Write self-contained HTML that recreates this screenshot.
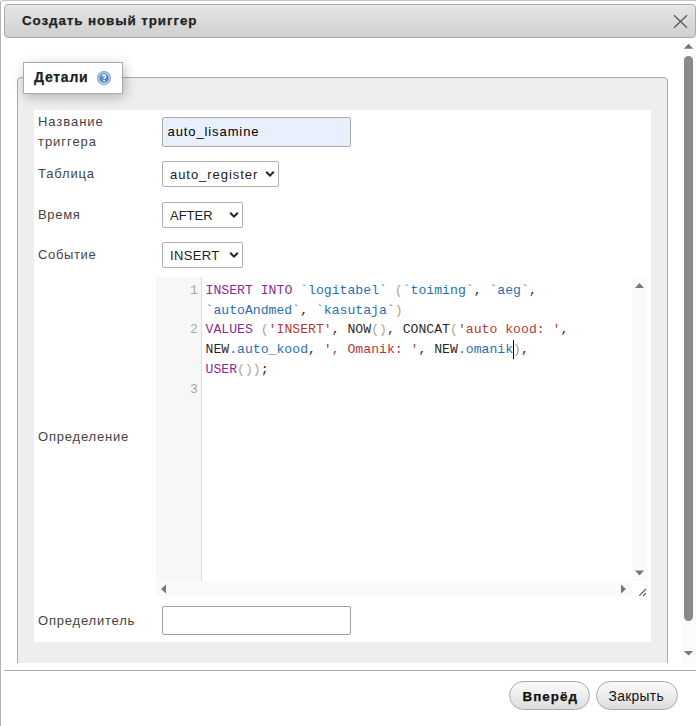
<!DOCTYPE html>
<html><head><meta charset="utf-8">
<style>
html,body{margin:0;padding:0;}
body{width:696px;height:726px;overflow:hidden;background:#fff;position:relative;font-family:"Liberation Sans",sans-serif;font-size:13px;color:#444;}
.a{position:absolute;}
.t{position:absolute;white-space:nowrap;line-height:13px;}
#dlg{left:0;top:0;width:720px;height:740px;border-left:1px solid #b4b4b4;border-top:1px solid #c4c4c4;border-top-left-radius:3px;box-sizing:border-box;}
#title{left:4px;top:4px;width:692px;height:34px;box-sizing:border-box;border:1px solid #aaa;border-radius:4px;background:linear-gradient(#e6e6e6,#cfcfcf);}
#fs{left:17px;top:77px;width:651px;height:600px;box-sizing:border-box;border:1px solid #aaa;border-radius:4px 4px 0 0;background:#eee;}
#clip{left:0;top:40px;width:696px;height:623px;overflow:hidden;}
#legend{left:23px;top:62px;width:100px;height:32px;box-sizing:border-box;border:1px solid #aaa;background:#fff;box-shadow:2px 3px 12px rgba(0,0,0,.25);}
#tbl{left:34px;top:110px;width:617px;height:532px;background:#fff;}
.inp{position:absolute;box-sizing:border-box;border:1px solid #aaa;border-radius:2px;background:#fff;}
.sel{position:absolute;box-sizing:border-box;border:1px solid #b0b0b0;border-radius:2px;background:#fff;}
.chev{position:absolute;}
.code{position:absolute;opacity:0.85;font-family:"Liberation Mono",monospace;font-size:13.15px;line-height:19.7px;white-space:pre;color:#000;}
.kw{color:#770088}.id{color:#0055aa}.st{color:#aa1111}.br{color:#999977}
.btn{position:absolute;box-sizing:border-box;border:1px solid #aaa;border-radius:14.5px;background:linear-gradient(#fafafa,#f0f0f0 40%,#dcdcdc);}
</style></head><body>
<div id="dlg" class="a"></div>
<div id="title" class="a"></div>
<div class="t" style="left:22px;top:14px;font-weight:bold;color:#222;font-size:13.4px;letter-spacing:0.9px;-webkit-text-stroke:0.25px #222;">Создать новый триггер</div>
<svg class="a" style="left:670px;top:11px" width="22" height="22" viewBox="0 0 22 22"><path d="M4 4.3 L17 16.7 M17 4.3 L4 16.7" stroke="#5c5c5c" stroke-width="1.4" fill="none"/></svg>

<div id="clip" class="a">
  <div style="position:absolute;left:0;top:-40px;width:696px;height:726px;">
  <div id="fs" class="a"></div>
  <div id="tbl" class="a"></div>
  <div id="legend" class="a"></div>
  <div class="t" style="left:34px;top:70px;font-weight:bold;color:#222;font-size:14px;line-height:14px;letter-spacing:0.75px;-webkit-text-stroke:0.25px #222;">Детали</div>
  <svg class="a" style="left:96px;top:70px" width="16" height="16" viewBox="0 0 16 16">
    <circle cx="8" cy="8.1" r="7" fill="#7ea4d8"/>
    <circle cx="8" cy="8.1" r="5.9" fill="#d2e2f4"/>
    <circle cx="8" cy="8.1" r="4.9" fill="#5b89c9"/>
    <path d="M6.6 6.5 Q6.6 5 8.1 5 Q9.6 5 9.6 6.4 Q9.6 7.3 8.6 7.8 Q8.1 8.1 8.1 9" stroke="#fff" stroke-width="1.4" fill="none"/>
    <rect x="7.3" y="10" width="1.6" height="1.5" fill="#fff"/>
  </svg>

  <div class="t" style="left:38px;top:115px;letter-spacing:0.95px;">Название</div>
  <div class="t" style="left:38px;top:135px;letter-spacing:0.95px;">триггера</div>
  <div class="t" style="left:38px;top:167px;letter-spacing:0.85px;">Таблица</div>
  <div class="t" style="left:38px;top:208px;letter-spacing:0.7px;">Время</div>
  <div class="t" style="left:38px;top:248px;letter-spacing:0.65px;">Событие</div>
  <div class="t" style="left:38px;top:430px;letter-spacing:0.8px;">Определение</div>
  <div class="t" style="left:38px;top:614px;letter-spacing:0.8px;">Определитель</div>

  <div class="inp" style="left:162px;top:117px;width:189px;height:30px;background:#e8f0fe;"></div>
  <div class="t" style="left:167.5px;top:125px;color:#000;letter-spacing:0.9px;">auto_lisamine</div>

  <div class="sel" style="left:162px;top:161px;width:117px;height:26px;"></div>
  <div class="t" style="left:170px;top:168px;color:#222;letter-spacing:0.95px;">auto_register</div>
  <svg class="chev" style="left:265px;top:170px" width="10" height="8" viewBox="0 0 10 8"><path d="M1.2 1.8 L5 5.6 L8.8 1.8" stroke="#222" stroke-width="2" fill="none"/></svg>

  <div class="sel" style="left:162px;top:202px;width:81px;height:26px;"></div>
  <div class="t" style="left:170px;top:209px;color:#222;">AFTER</div>
  <svg class="chev" style="left:229px;top:211px" width="10" height="8" viewBox="0 0 10 8"><path d="M1.2 1.8 L5 5.6 L8.8 1.8" stroke="#222" stroke-width="2" fill="none"/></svg>

  <div class="sel" style="left:162px;top:242px;width:81px;height:26px;"></div>
  <div class="t" style="left:170px;top:249px;color:#222;letter-spacing:0.35px;">INSERT</div>
  <svg class="chev" style="left:229px;top:251px" width="10" height="8" viewBox="0 0 10 8"><path d="M1.2 1.8 L5 5.6 L8.8 1.8" stroke="#222" stroke-width="2" fill="none"/></svg>

  <!-- editor -->
  <div class="a" style="left:156px;top:277px;width:45px;height:304px;background:#f7f7f7;border-right:1px solid #ddd;"></div>
  <div class="a" style="left:632px;top:277px;width:15px;height:304px;background:#fafafa;"></div>
  <div class="a" style="left:156px;top:581px;width:476px;height:15px;background:#fafafa;"></div>
  <svg class="a" style="left:632px;top:277px" width="15" height="320" viewBox="0 0 15 320">
    <path d="M3 11 L7.5 6 L12 11 Z" fill="#777"/>
    <path d="M3 293.5 L7.5 298.5 L12 293.5 Z" fill="#777"/>
    <path d="M7.2 318.8 L14 312 M11.2 319 L14 316.2" stroke="#555" stroke-width="1.1" fill="none"/>
  </svg>
  <svg class="a" style="left:156px;top:581px" width="476" height="15" viewBox="0 0 476 15">
    <path d="M10 3.5 L5 8 L10 12.5 Z" fill="#777"/>
    <path d="M465 3.5 L470 8 L465 12.5 Z" fill="#777"/>
  </svg>
  <div class="code" style="left:156px;top:281px;width:42px;text-align:right;color:#999;">1

2


3</div>
  <div class="code" style="left:205.5px;top:281px;"><span class="kw">INSERT</span> <span class="kw">INTO</span> <span class="id">`logitabel`</span> <span class="br">(</span><span class="id">`toiming`</span>, <span class="id">`aeg`</span>,
<span class="id">`autoAndmed`</span>, <span class="id">`kasutaja`</span><span class="br">)</span>
<span class="kw">VALUES</span> <span class="br">(</span><span class="st">'INSERT'</span>, NOW<span class="br">()</span>, CONCAT<span class="br">(</span><span class="st">'auto kood: '</span>,
NEW<span class="id">.auto_kood</span>, <span class="st">', Omanik: '</span>, NEW<span class="id">.omanik</span><span class="br">)</span>,
<span class="kw">USER</span><span class="br">())</span>;</div>
  <div class="a" style="left:513px;top:340px;width:1px;height:19px;background:#000;"></div>

  <div class="inp" style="left:162px;top:606px;width:189px;height:29px;border-color:#a0a0a0;"></div>
  </div>
</div>

<!-- dialog scrollbar -->
<div class="a" style="left:682px;top:40px;width:14px;height:623px;background:#fbfbfb;"></div>
<svg class="a" style="left:682px;top:40px" width="14" height="623" viewBox="0 0 14 623">
  <path d="M1.8 8.8 L6.5 3.8 L11.2 8.8 Z" fill="#777"/>
  <rect x="2" y="16" width="9" height="565" rx="4.5" fill="#898989"/>
  <path d="M1.8 611 L6.5 615.5 L11.2 611 Z" fill="#777"/>
</svg>

<div class="a" style="left:4px;top:670px;width:692px;height:1px;background:#aaa;"></div>
<div class="btn" style="left:509px;top:681px;width:81px;height:29px;"></div>
<div class="t" style="left:522.5px;top:690px;font-weight:bold;color:#111;font-size:13.4px;letter-spacing:1.05px;-webkit-text-stroke:0.25px #111;">Вперёд</div>
<div class="btn" style="left:596px;top:681px;width:82px;height:29px;"></div>
<div class="t" style="left:608.5px;top:690px;color:#111;font-size:13.8px;line-height:14px;letter-spacing:0.33px;">Закрыть</div>
</body></html>
